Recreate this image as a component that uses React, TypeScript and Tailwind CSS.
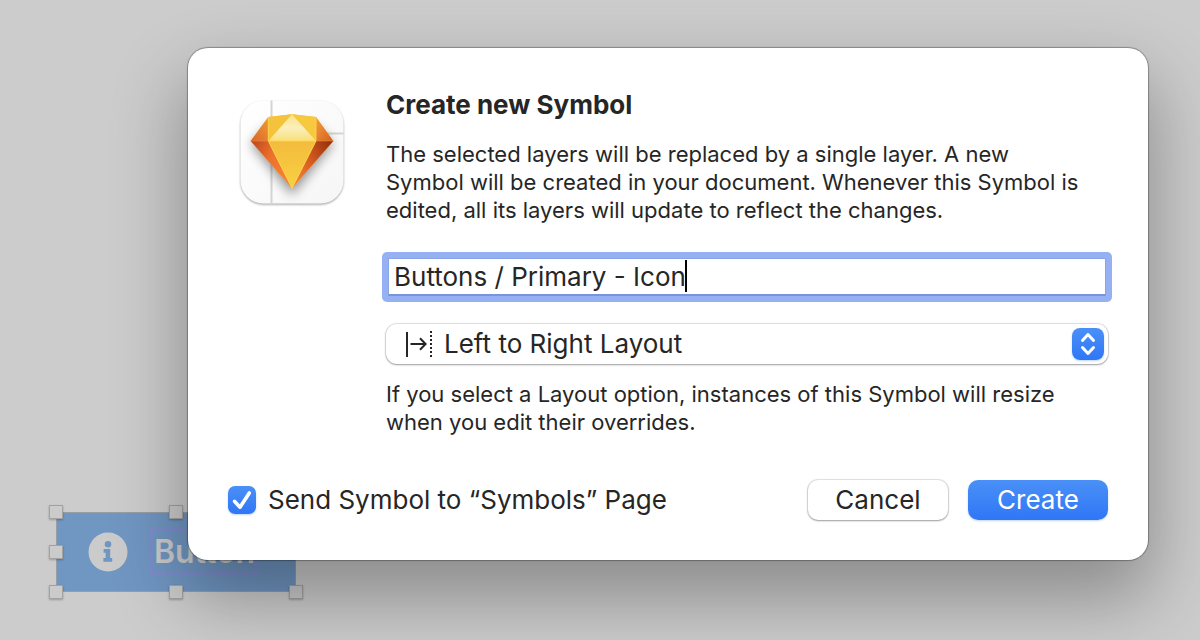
import React from "react";

const handles = [
  "left-0 top-0",
  "left-[120px] top-0",
  "left-0 top-10",
  "left-0 top-20",
  "left-[120px] top-20",
  "left-[240px] top-20",
];

function CanvasSelection() {
  return (
    <div className="absolute left-[49px] top-[505px] h-[94px] w-[254px]">
      <div className="absolute left-[7px] top-[7px] flex h-20 w-60 items-center gap-[22px] border border-[#979ea6] bg-[#7096c2] pl-[31px]">
        <svg viewBox="0 0 40 40" className="size-10 shrink-0" aria-hidden="true">
          <circle cx="20" cy="20" r="19.5" fill="#cbcbcb" />
          <circle cx="20" cy="12.2" r="3.3" fill="#7096c2" />
          <path d="M15.6 17h6.6v9h2v3.8h-8.8V26h2.2v-5.2h-2z" fill="#7096c2" />
        </svg>
        <div className="h-12 w-[108px] border-4 border-[#7b8fcb] text-[32px] leading-10 font-semibold text-[#cbcbcb]">Button</div>
      </div>
      {handles.map((place) => (
        <span key={place} className={`absolute size-[14px] border border-[#a2a2a2] bg-[#cbcbcb] shadow-[0_1px_2px_rgba(0,0,0,0.25)] ${place}`} />
      ))}
    </div>
  );
}

function GemIcon() {
  return (
    <svg viewBox="0 0 112 112" className="-m-1 size-28 shrink-0" role="img" aria-label="Sketch">
      <defs>
        <linearGradient id="tile" x1="0" y1="0" x2="1" y2="1">
          <stop offset="0" stopColor="#ffffff" />
          <stop offset="1" stopColor="#f6f6f6" />
        </linearGradient>
        <linearGradient id="crownLeft" x1="0" y1="1" x2="1" y2="0">
          <stop offset="0" stopColor="#d9652a" />
          <stop offset="1" stopColor="#f29a36" />
        </linearGradient>
        <linearGradient id="crownRight" x1="0" y1="0" x2="1" y2="1">
          <stop offset="0" stopColor="#f5a03a" />
          <stop offset="1" stopColor="#d55f22" />
        </linearGradient>
        <linearGradient id="sideLeft" x1="0" y1="0" x2="1" y2="0.6">
          <stop offset="0" stopColor="#b8451a" />
          <stop offset="0.5" stopColor="#ee702c" />
          <stop offset="1" stopColor="#f58231" />
        </linearGradient>
        <linearGradient id="sideRight" x1="1" y1="0" x2="0" y2="0.7">
          <stop offset="0" stopColor="#8d2c0b" />
          <stop offset="0.55" stopColor="#d65a20" />
          <stop offset="1" stopColor="#f58231" />
        </linearGradient>
        <linearGradient id="shine" x1="0" y1="0" x2="0" y2="1">
          <stop offset="0" stopColor="#f9e27f" />
          <stop offset="0.5" stopColor="#fbefbd" />
          <stop offset="1" stopColor="#f9df78" />
        </linearGradient>
        <linearGradient id="front" x1="0" y1="0" x2="0" y2="1">
          <stop offset="0" stopColor="#f4bb3c" />
          <stop offset="1" stopColor="#f8d044" />
        </linearGradient>
        <filter id="soft" x="-40%" y="-40%" width="180%" height="180%">
          <feGaussianBlur stdDeviation="6" />
        </filter>
        <filter id="edge" x="-10%" y="-10%" width="120%" height="120%">
          <feGaussianBlur stdDeviation="0.9" />
        </filter>
        <clipPath id="tileClip">
          <rect x="4.5" y="4.5" width="103" height="103" rx="23" />
        </clipPath>
      </defs>
      <rect x="4.5" y="5.8" width="103" height="103" rx="23" fill="#000" opacity="0.34" filter="url(#edge)" />
      <rect x="4.5" y="4.5" width="103" height="103" rx="23" fill="url(#tile)" />
      <g clipPath="url(#tileClip)">
        <path d="M35.5 4v104M76 37.5h32" stroke="#d4d4d4" strokeWidth="2" fill="none" />
        <path d="M15 48l41 51 41-51-17-17H32z" fill="#000" opacity="0.42" filter="url(#soft)" />
      </g>
      <path d="M32.3 21L56 18.3 80 21 97.3 45 56 92.3 14.7 45z" fill="#f4bd38" />
      <path d="M32.3 21L14.7 45h17.6z" fill="url(#crownLeft)" />
      <path d="M80 21l17.3 24H80z" fill="url(#crownRight)" />
      <path d="M32.3 21L56 18.3 32.3 45z" fill="#f5c23b" />
      <path d="M80 21L56 18.3 80 45z" fill="#f7c93f" />
      <path d="M56 18.3L32.3 45H80z" fill="url(#shine)" />
      <path d="M14.7 45h17.6L56 92.3z" fill="url(#sideLeft)" />
      <path d="M97.3 45H80L56 92.3z" fill="url(#sideRight)" />
      <path d="M32.3 45H80L56 92.3z" fill="url(#front)" />
      <path d="M32.3 21v24M80 21v24M32.3 45L56 92.3 80 45M32.3 45H80" fill="none" stroke="#fbd94f" strokeWidth="0.8" />
      <path d="M14.7 45h17.6M80 45h17.3" stroke="#ef8740" strokeWidth="0.6" />
    </svg>
  );
}

export default function App() {
  return (
    <main className="relative min-h-screen overflow-hidden bg-[#cccccc] pt-12 pr-[52px] pb-20 pl-[188px] font-['Inter',sans-serif] text-[#262626]">
      <CanvasSelection />
      <form
        role="dialog"
        aria-labelledby="dialog-title"
        onSubmit={(e) => e.preventDefault()}
        className="relative rounded-[20px] bg-white p-10 shadow-[0_0_1px_1px_rgba(0,0,0,0.3),0_34px_72px_4px_rgba(0,0,0,0.32)]"
      >
        <div className="flex gap-[42px] pl-3">
          <div className="pt-3">
            <GemIcon />
          </div>
          <div className="min-w-0 flex-1">
            <h1 id="dialog-title" className="pt-px text-[26px] leading-8 font-bold">Create new Symbol</h1>
            <p className="mt-[19px] max-w-[704px] text-[22px] leading-7">
              The selected layers will be replaced by a single layer. A new Symbol will be created in your document. Whenever this Symbol is edited, all its layers will update to reflect the changes.
            </p>
            <div className="relative -mx-1 mt-7 rounded-[5px] bg-[#95b0f3] p-1.5">
              <input
                type="text"
                aria-label="Symbol name"
                defaultValue="Buttons / Primary - Icon"
                className="block h-[38px] w-full border border-b-2 border-[#8aa4e8] border-b-[#7894dc] bg-white px-[5px] text-[26px] outline-none"
              />
              <span className="absolute top-2 left-[303px] h-8 w-0.5 bg-black" />
            </div>
            <div className="relative mt-[22px] flex h-10 items-center">
              <select
                aria-label="Layout"
                className="h-10 w-full appearance-none rounded-[11px] bg-white pb-0.5 pl-[58px] text-[26px] shadow-[0_0_1px_1px_rgba(0,0,0,0.12),0_1px_2px_rgba(0,0,0,0.3)] outline-none"
              >
                <option>Left to Right Layout</option>
              </select>
              <svg viewBox="0 0 28 28" className="pointer-events-none absolute left-5 size-7" fill="none" stroke="#262626" strokeWidth="2" aria-hidden="true">
                <path d="M1 2v25M4.5 14h14.5M14 8.2l5.6 5.8-5.6 5.8" />
                <path d="M25 1v26" strokeDasharray="2 2" />
              </svg>
              <span className="pointer-events-none absolute right-1 flex size-8 items-center justify-center rounded-lg bg-linear-to-b from-[#4a90f7] to-[#3076f6] shadow-[0_1px_2px_rgba(48,118,246,0.3)]">
                <svg viewBox="0 0 32 32" className="size-8" fill="none" stroke="white" strokeWidth="3" strokeLinecap="round" strokeLinejoin="round" aria-hidden="true">
                  <path d="M10.5 12.5L16 6.5l5.5 6M10.5 19.5l5.5 6 5.5-6" />
                </svg>
              </span>
            </div>
            <p className="mt-4 text-[22px] leading-7">
              If you select a Layout option, instances of this Symbol will resize when you edit their overrides.
            </p>
          </div>
        </div>
        <div className="mt-11 flex items-center justify-between">
          <label className="flex items-center gap-3 text-[26px] leading-10">
            <span className="relative flex size-7">
              <input type="checkbox" defaultChecked className="size-7 appearance-none rounded-[7px] bg-linear-to-b from-[#4a90f7] to-[#3076f6] shadow-[0_1px_2px_rgba(48,118,246,0.3)]" />
              <svg viewBox="0 0 28 28" className="pointer-events-none absolute inset-0" fill="none" stroke="white" strokeWidth="3.6" strokeLinecap="round" strokeLinejoin="round" aria-hidden="true">
                <path d="M6.5 15.3l5.5 5.9L21.3 7" />
              </svg>
            </span>
            Send Symbol to “Symbols” Page
          </label>
          <div className="flex gap-5 text-[26px] leading-10">
            <button type="button" className="w-[140px] rounded-[10px] bg-white shadow-[0_0_1px_1px_rgba(0,0,0,0.12),0_1px_2px_rgba(0,0,0,0.3)]">Cancel</button>
            <button type="submit" className="w-[140px] rounded-[10px] bg-linear-to-b from-[#4a90f7] to-[#3076f6] text-white shadow-[0_1px_2px_rgba(48,118,246,0.3)]">Create</button>
          </div>
        </div>
      </form>
    </main>
  );
}
